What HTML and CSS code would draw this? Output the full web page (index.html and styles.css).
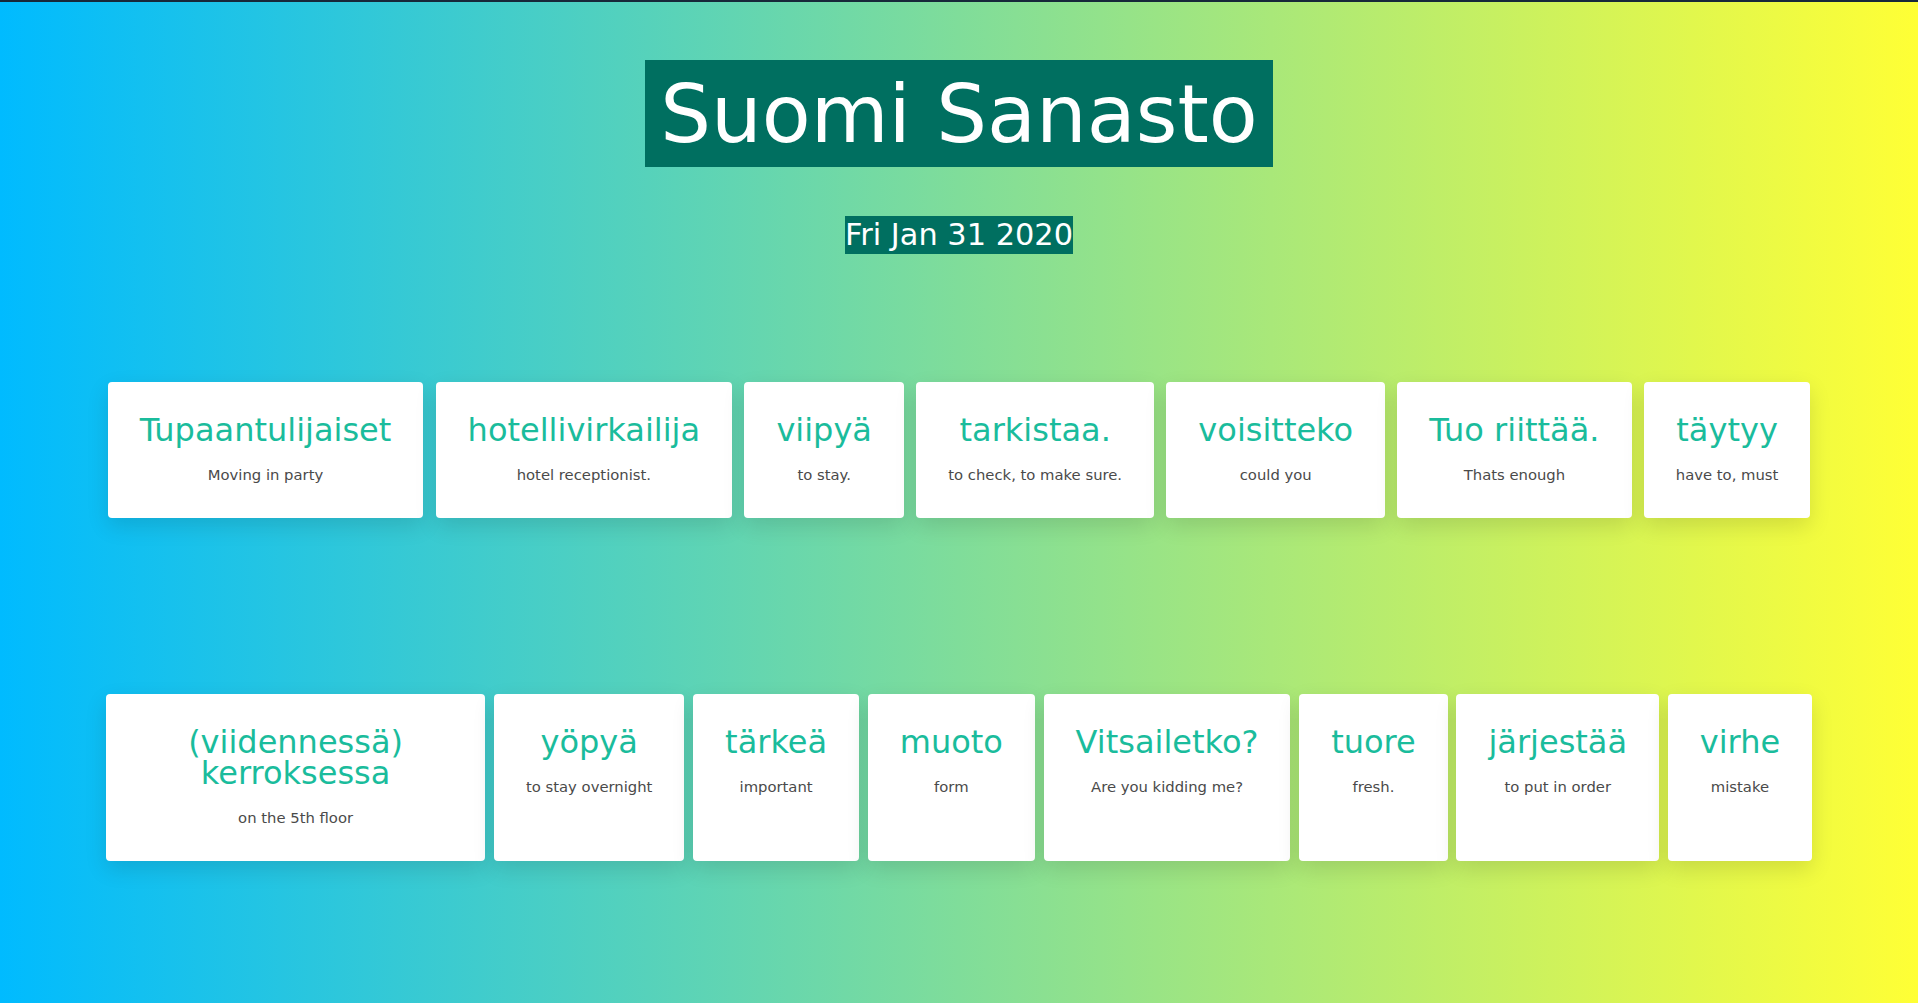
FILE: index.html
```html
<!DOCTYPE html>
<html lang="fi">
<head>
<meta charset="utf-8">
<title>Suomi Sanasto</title>
<link rel="stylesheet" href="styles.css">
</head>
<body>
  <header class="header">
    <h1 class="title">Suomi Sanasto</h1>
    <p class="date">Fri Jan 31 2020</p>
  </header>
  <main class="board">
    <section class="row row--first">
      <article class="card"><h2 class="word">Tupaantulijaiset</h2><p class="meaning">Moving in party</p></article>
      <article class="card"><h2 class="word">hotellivirkailija</h2><p class="meaning">hotel receptionist.</p></article>
      <article class="card"><h2 class="word">viipyä</h2><p class="meaning">to stay.</p></article>
      <article class="card"><h2 class="word">tarkistaa.</h2><p class="meaning">to check, to make sure.</p></article>
      <article class="card"><h2 class="word">voisitteko</h2><p class="meaning">could you</p></article>
      <article class="card"><h2 class="word">Tuo riittää.</h2><p class="meaning">Thats enough</p></article>
      <article class="card"><h2 class="word">täytyy</h2><p class="meaning">have to, must</p></article>
    </section>
    <section class="row row--second">
      <article class="card card--wide"><h2 class="word">(viidennessä) kerroksessa</h2><p class="meaning">on the 5th floor</p></article>
      <article class="card"><h2 class="word">yöpyä</h2><p class="meaning">to stay overnight</p></article>
      <article class="card"><h2 class="word">tärkeä</h2><p class="meaning">important</p></article>
      <article class="card"><h2 class="word">muoto</h2><p class="meaning">form</p></article>
      <article class="card"><h2 class="word">Vitsailetko?</h2><p class="meaning">Are you kidding me?</p></article>
      <article class="card"><h2 class="word">tuore</h2><p class="meaning">fresh.</p></article>
      <article class="card"><h2 class="word">järjestää</h2><p class="meaning">to put in order</p></article>
      <article class="card"><h2 class="word">virhe</h2><p class="meaning">mistake</p></article>
    </section>
  </main>
</body>
</html>
```

FILE: styles.css
```css
* {
  box-sizing: border-box;
}

html {
  height: 100%;
}

body {
  margin: 0;
  min-height: 100vh;
  border-top: 2px solid #17283a;
  background: linear-gradient(to right, #00bbff 0%, #ffff35 100%);
  font-family: "DejaVu Sans", "Liberation Sans", sans-serif;
  overflow: hidden;
}

.header {
  display: flex;
  flex-direction: column;
  align-items: center;
  padding-top: 58px;
}

.title {
  margin: 0;
  padding: 3px 15px 0;
  background: #006f60;
  color: #ffffff;
  font-size: 80px;
  font-weight: normal;
  line-height: 104px;
  white-space: nowrap;
}

.date {
  margin: 49px 0 0;
  background: #006f60;
  color: #ffffff;
  font-size: 30.4px;
  line-height: 38px;
  white-space: nowrap;
}

.board {
  max-width: 1715px;
  margin: 0 auto;
}

.row {
  display: flex;
  flex-wrap: nowrap;
  justify-content: space-around;
  align-items: stretch;
}

.row--first {
  margin-top: 128px;
}

.row--second {
  margin-top: 176px;
}

.card {
  flex: 0 0 auto;
  max-width: 384px;
  margin: 0 4.35px;
  padding: 33px 32px 34px;
  background: #ffffff;
  border-radius: 4px;
  box-shadow: 0 8px 22px rgba(0, 0, 0, 0.12);
  text-align: center;
}

.card--wide {
  flex-shrink: 1;
}

.word {
  margin: 0;
  color: #1abc9c;
  font-size: 32px;
  font-weight: normal;
  line-height: 31px;
}

.meaning {
  margin: 20px 0 0;
  color: #4a4a4a;
  font-size: 14.8px;
  line-height: 18px;
  white-space: nowrap;
}
```
